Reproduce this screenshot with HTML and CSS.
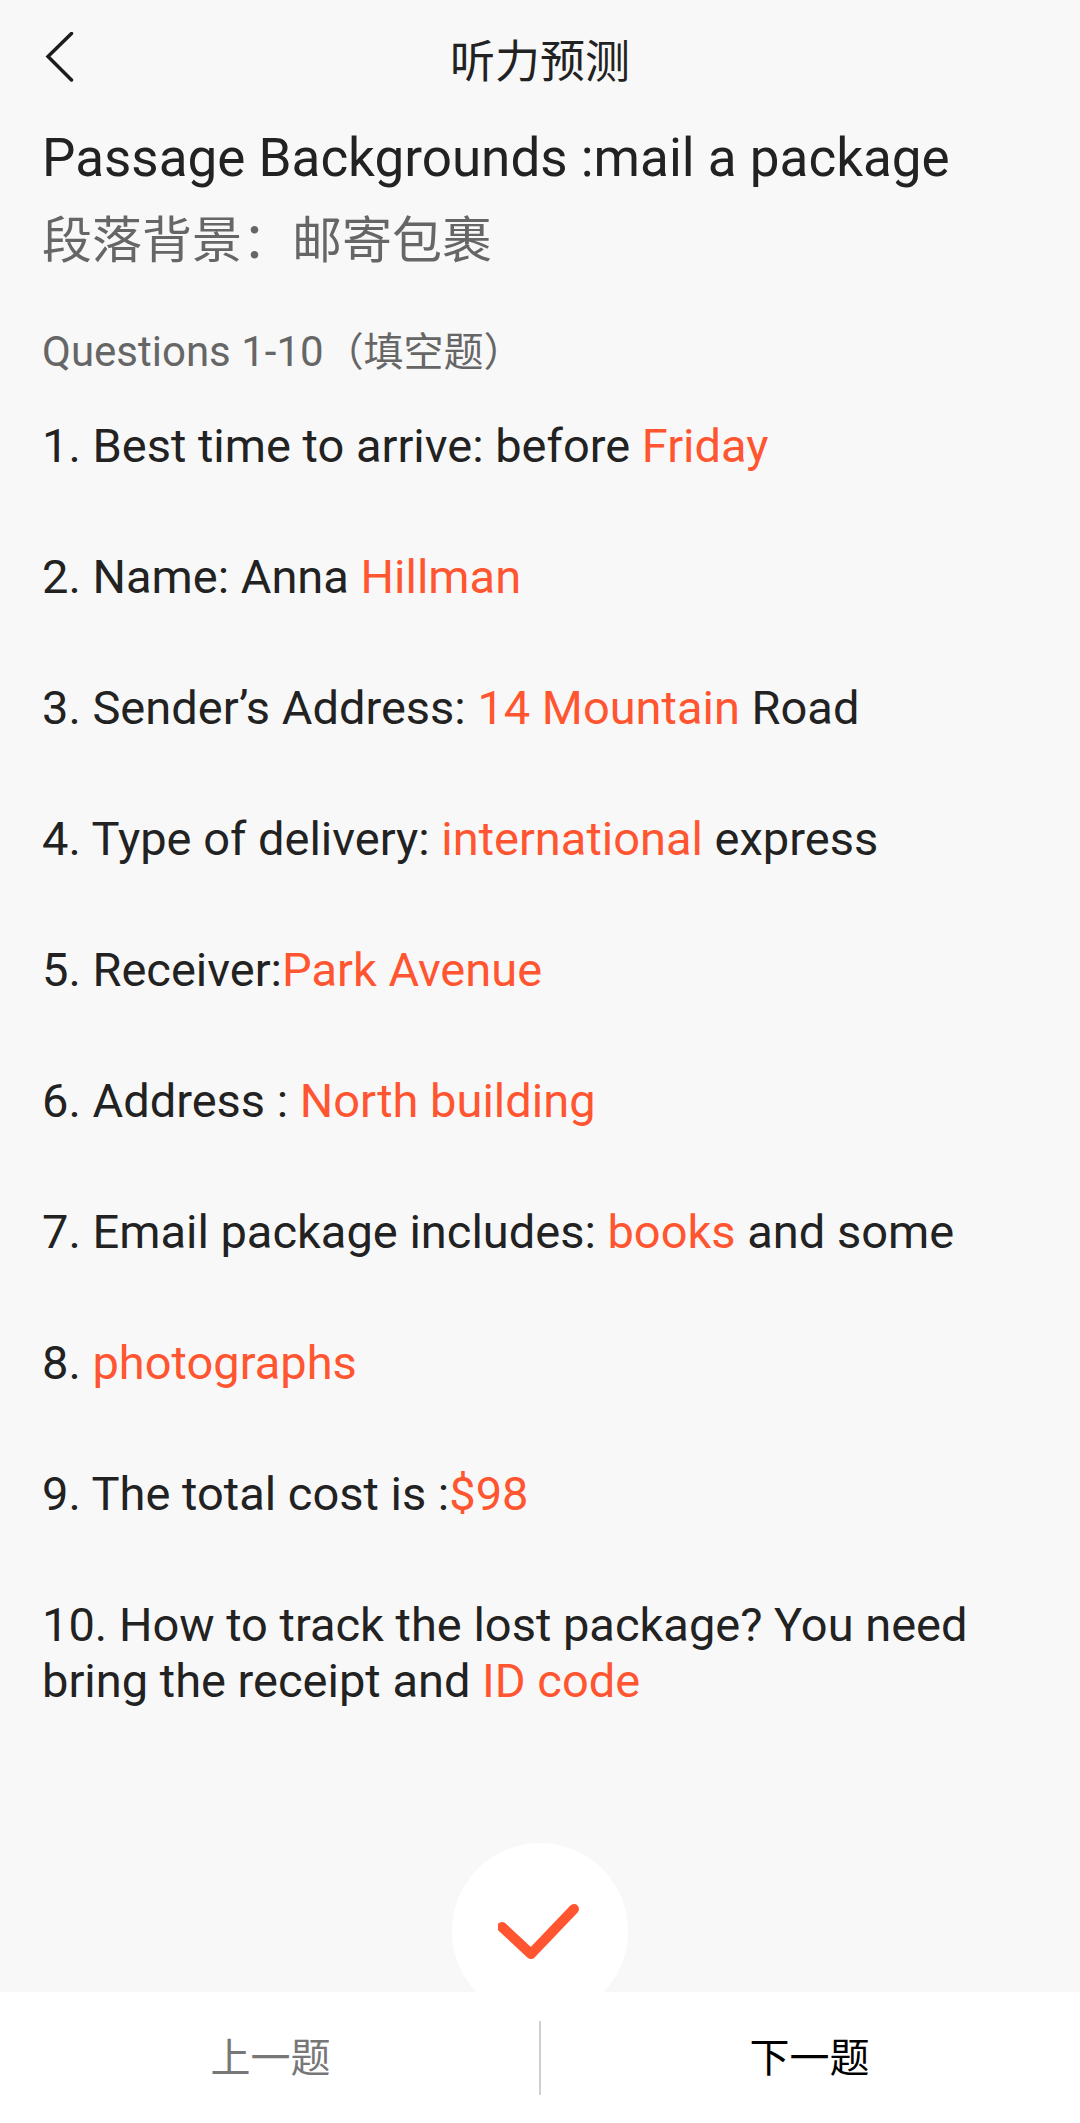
FILE: index.html
```html
<!DOCTYPE html>
<html lang="zh">
<head>
<meta charset="utf-8">
<title>听力预测</title>
<link rel="stylesheet" href="styles.css">
</head>
<body>
<div class="page">
  <header class="nav">
    <svg class="back" width="30" height="50" viewBox="0 0 30 50"><path d="M27.5 1.5 L4 24.5 L27.5 48"/></svg>
    <h1 class="nav-title">听力预测</h1>
  </header>
  <main class="content">
    <h2 class="title">Passage Backgrounds :mail a package</h2>
    <p class="subtitle">段落背景：邮寄包裹</p>
    <p class="section">Questions 1-10<span class="section-cjk">（填空题）</span></p>
    <ol class="items">
      <li>1. Best time to arrive: before <em>Friday</em></li>
      <li>2. Name: Anna <em>Hillman</em></li>
      <li>3. Sender’s Address: <em>14 Mountain</em> Road</li>
      <li>4. Type of delivery: <em>international</em> express</li>
      <li>5. Receiver:<em>Park Avenue</em></li>
      <li>6. Address : <em>North building</em></li>
      <li>7. Email package includes: <em>books</em> and some</li>
      <li>8. <em>photographs</em></li>
      <li>9. The total cost is :<em>$98</em></li>
      <li>10. How to track the lost package? You need bring the receipt and <em>ID code</em></li>
    </ol>
  </main>
  <div class="check-wrap">
    <div class="check">
      <svg width="84" height="60" viewBox="0 0 84 60"><path d="M4 26 L33 53 L76 8"/></svg>
    </div>
  </div>
  <footer class="footer">
    <div class="btn prev">上一题</div>
    <div class="btn next">下一题</div>
  </footer>
</div>
</body>
</html>
```
FILE: styles.css
```css
* { box-sizing: border-box; }
html, body { margin: 0; padding: 0; }
body {
  width: 1080px;
  height: 2123px;
  background: #f8f8f8;
  font-family: Roboto, "Noto Sans CJK SC", sans-serif;
  overflow: hidden;
}
.page {
  position: relative;
  height: 2123px;
  display: flex;
  flex-direction: column;
}
.nav {
  position: relative;
  height: 122px;
  display: flex;
  align-items: center;
  justify-content: center;
  padding-top: 3px;
}
.back {
  position: absolute;
  left: 44px;
  top: 32px;
  fill: none;
  stroke: #1c1c1c;
  stroke-width: 3.5;
  stroke-linecap: round;
}
.nav-title {
  margin: 0;
  font-size: 45px;
  font-weight: 400;
  line-height: 60px;
  color: #222;
}
.content {
  padding: 0 43px 0 42px;
  flex: 1;
}
.title {
  margin: 0;
  font-size: 53px;
  font-weight: 400;
  line-height: 72px;
  color: #222;
}
.subtitle {
  margin: 11px 0 0;
  font-size: 50px;
  line-height: 72px;
  color: #666;
}
.section {
  margin: 47px 0 0;
  font-size: 42px;
  line-height: 56px;
  color: #666;
}
.section-cjk { font-size: 40px; }
.items {
  list-style: none;
  margin: 37px 0 0;
  padding: 0;
  font-size: 47px;
  line-height: 56px;
  color: #222;
}
.items li { margin-bottom: 75px; }
.items em {
  font-style: normal;
  color: #ff5530;
}
.check-wrap {
  position: absolute;
  left: 452px;
  top: 1843px;
  width: 176px;
  height: 176px;
}
.check {
  width: 176px;
  height: 176px;
  border-radius: 50%;
  background: #fff;
  display: flex;
  align-items: center;
  justify-content: center;
}
.check svg {
  fill: none;
  stroke: #ff5530;
  stroke-width: 10;
  stroke-linecap: round;
  stroke-linejoin: round;
}
.footer {
  position: absolute;
  left: 0;
  right: 0;
  top: 1992px;
  height: 131px;
  background: #fff;
  display: flex;
  align-items: center;
}
.btn {
  height: 74px;
  margin-top: 1px;
  font-size: 40px;
  line-height: 76px;
  text-align: center;
}
.prev { flex: 0 0 541px; color: #777; border-right: 2px solid #d0d0d0; padding-left: 2px; }
.next { flex: 1; color: #000; padding-right: 2px; }
```
